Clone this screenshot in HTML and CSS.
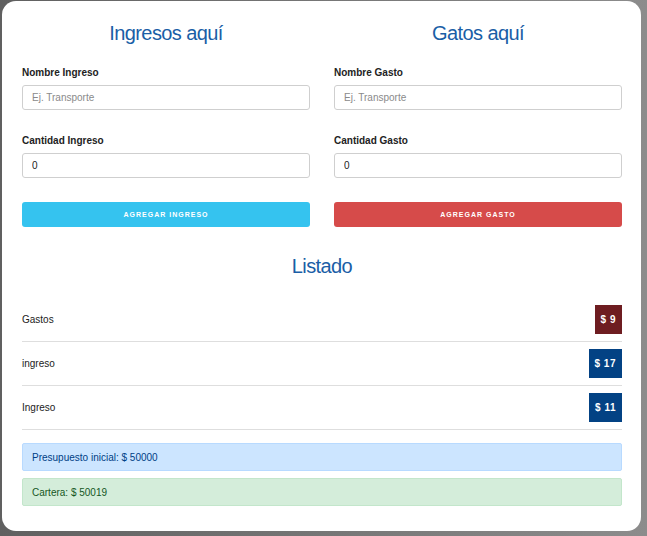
FILE: index.html
```html
<!DOCTYPE html>
<html lang="es">
<head>
<meta charset="utf-8">
<title>Presupuesto</title>
<link rel="stylesheet" href="styles.css">
</head>
<body>
<div class="card">
  <div class="forms">
    <div class="col">
      <h2 class="title">Ingresos aquí</h2>
      <label class="label">Nombre Ingreso</label>
      <input class="input" type="text" placeholder="Ej. Transporte">
      <label class="label label-2">Cantidad Ingreso</label>
      <input class="input" type="text" value="0">
      <button class="btn btn-blue">AGREGAR INGRESO</button>
    </div>
    <div class="col">
      <h2 class="title">Gatos aquí</h2>
      <label class="label">Nombre Gasto</label>
      <input class="input" type="text" placeholder="Ej. Transporte">
      <label class="label label-2">Cantidad Gasto</label>
      <input class="input" type="text" value="0">
      <button class="btn btn-red">AGREGAR GASTO</button>
    </div>
  </div>
  <h2 class="title listado">Listado</h2>
  <ul class="list">
    <li class="row"><span>Gastos</span><span class="badge badge-red">$ 9</span></li>
    <li class="row"><span>ingreso</span><span class="badge badge-blue">$ 17</span></li>
    <li class="row"><span>Ingreso</span><span class="badge badge-blue">$ 11</span></li>
  </ul>
  <div class="alert alert-blue">Presupuesto inicial: $ 50000</div>
  <div class="alert alert-green">Cartera: $ 50019</div>
</div>
</body>
</html>
```
FILE: styles.css
```css
html, body {
  margin: 0;
  padding: 0;
}
body {
  width: 647px;
  height: 536px;
  background: linear-gradient(to right, #606060, #8c8c8c);
  font-family: "Liberation Sans", Arial, sans-serif;
  overflow: hidden;
}
.card {
  margin: 1px 6px 0 2px;
  height: 530px;
  box-sizing: border-box;
  background: #fff;
  border-radius: 14px;
  padding: 20px 19px 0 20px;
}
.forms {
  display: grid;
  grid-template-columns: 288px 288px;
  column-gap: 24px;
}
.col {
  display: flex;
  flex-direction: column;
}
.title {
  margin: 0;
  font-size: 20px;
  line-height: 24px;
  font-weight: normal;
  color: #1a5ea6;
  text-align: center;
  letter-spacing: -0.6px;
}
.label {
  margin-top: 21px;
  font-size: 10px;
  line-height: 14px;
  font-weight: bold;
  color: #222;
}
.label-2 {
  margin-top: 24px;
}
.input {
  margin-top: 5px;
  height: 25px;
  box-sizing: border-box;
  border: 1px solid #cfcfcf;
  border-radius: 3px;
  padding: 0 9px;
  font-family: "Liberation Sans", Arial, sans-serif;
  font-size: 10px;
  color: #222;
  outline: none;
}
.input::placeholder {
  color: #8a8a8a;
}
.btn {
  margin-top: 24px;
  height: 25px;
  border: none;
  border-radius: 3px;
  color: #fff;
  font-family: "Liberation Sans", Arial, sans-serif;
  font-size: 7px;
  font-weight: bold;
  letter-spacing: 1px;
  padding: 0;
}
.btn-blue {
  background: #35c3ef;
}
.btn-red {
  background: #d64b4a;
}
.listado {
  margin-top: 27px;
}
.list {
  list-style: none;
  margin: 20px 0 0 0;
  padding: 0;
}
.row {
  height: 44px;
  box-sizing: border-box;
  border-bottom: 1px solid #dedede;
  display: flex;
  align-items: center;
  justify-content: space-between;
  font-size: 10px;
  color: #222;
}
.badge {
  height: 29px;
  display: flex;
  align-items: center;
  padding: 0 6px;
  color: #fff;
  font-weight: bold;
  font-size: 10px;
  letter-spacing: 0.5px;
}
.badge-red {
  background: #6e1d21;
}
.badge-blue {
  background: #034284;
}
.alert {
  height: 28px;
  box-sizing: border-box;
  border: 1px solid;
  border-radius: 2px;
  display: flex;
  align-items: center;
  padding-left: 9px;
  font-size: 10px;
}
.alert-blue {
  margin-top: 13px;
  background: #cce5ff;
  border-color: #b8daff;
  color: #004085;
}
.alert-green {
  margin-top: 7px;
  background: #d4edda;
  border-color: #c3e6cb;
  color: #155724;
}
```
